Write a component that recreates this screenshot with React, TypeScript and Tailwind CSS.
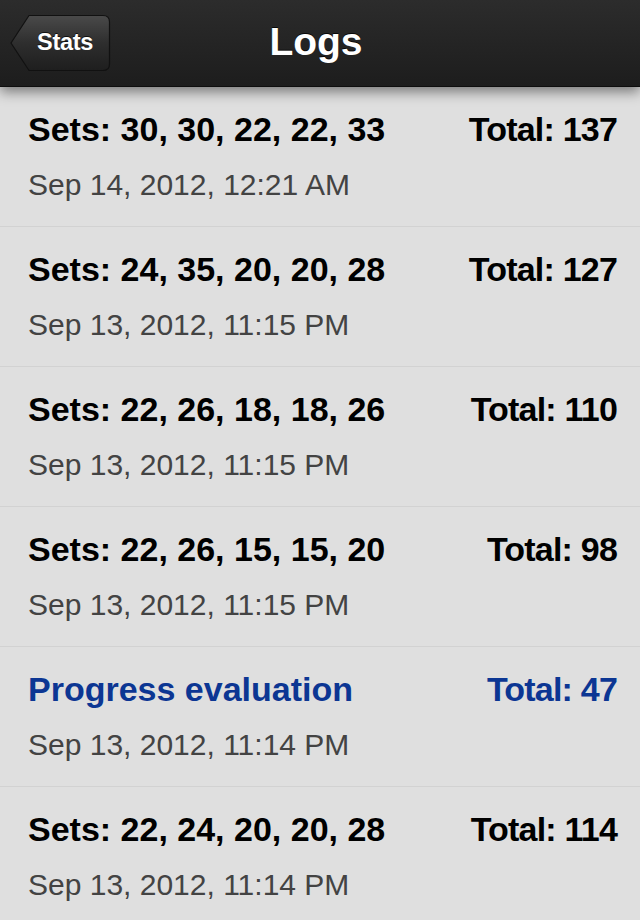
import React from "react";

type Log = { title: string; total: number; date: string; special?: boolean };

const logs: Log[] = [
  { title: "Sets: 30, 30, 22, 22, 33", total: 137, date: "Sep 14, 2012, 12:21 AM" },
  { title: "Sets: 24, 35, 20, 20, 28", total: 127, date: "Sep 13, 2012, 11:15 PM" },
  { title: "Sets: 22, 26, 18, 18, 26", total: 110, date: "Sep 13, 2012, 11:15 PM" },
  { title: "Sets: 22, 26, 15, 15, 20", total: 98, date: "Sep 13, 2012, 11:15 PM" },
  { title: "Progress evaluation", total: 47, date: "Sep 13, 2012, 11:14 PM", special: true },
  { title: "Sets: 22, 24, 20, 20, 28", total: 114, date: "Sep 13, 2012, 11:14 PM" },
];

const BackButton = () => (
  <div className="relative h-[58px] w-[101px]">
    <svg className="absolute inset-0" width="101" height="58" viewBox="0 0 101 58">
      <defs>
        <linearGradient id="btn" x1="0" y1="0" x2="0" y2="1">
          <stop offset="0" stopColor="#4a4a4a" />
          <stop offset="0.5" stopColor="#2e2e2e" />
          <stop offset="1" stopColor="#1e1e1e" />
        </linearGradient>
      </defs>
      <path
        d="M1 29 L19 1.5 H93 Q99.5 1.5 99.5 8 V50 Q99.5 56.5 93 56.5 H19 Z"
        fill="url(#btn)"
        stroke="#111"
        strokeWidth="1.2"
      />
    </svg>
    <span className="absolute inset-0 flex items-center justify-center pl-[9px] text-[23.5px] font-bold tracking-[-0.3px] text-white [text-shadow:0_-1px_0_rgba(0,0,0,0.7)]">
      Stats
    </span>
  </div>
);

export default function App() {
  return (
    <div className="h-[920px] w-[640px] overflow-hidden bg-[#dfdfdf] font-['Liberation_Sans',Arial,sans-serif]">
      <header className="relative z-10 flex h-[87px] items-center border-b border-[#0e0e0e] bg-gradient-to-b from-[#2c2c2c] to-[#1d1d1d] px-[10px] shadow-[0_5px_12px_rgba(0,0,0,0.45)]">
        <BackButton />
        <h1 className="pointer-events-none absolute inset-x-0 top-0 flex h-[87px] items-center justify-center pb-[2px] pr-[8px] text-[39px] font-bold text-white [text-shadow:0_-1px_0_rgba(0,0,0,0.8)]">
          Logs
        </h1>
      </header>
      <ul>
        {logs.map((log, i) => (
          <li
            key={i}
            className="flex h-[140px] flex-col border-b border-[#d2d2d2] pl-[28px] pr-[23px] pt-[24px]"
          >
            <div
              className={`flex items-center justify-between text-[34px] leading-[36px] font-bold ${
                log.special ? "text-[#0c3693]" : "text-black"
              }`}
            >
              <span>{log.title}</span>
              <span className="tracking-[-0.8px]">Total: {log.total}</span>
            </div>
            <div className="mt-[21px] text-[30px] leading-[34px] text-[#434343]">{log.date}</div>
          </li>
        ))}
      </ul>
    </div>
  );
}
